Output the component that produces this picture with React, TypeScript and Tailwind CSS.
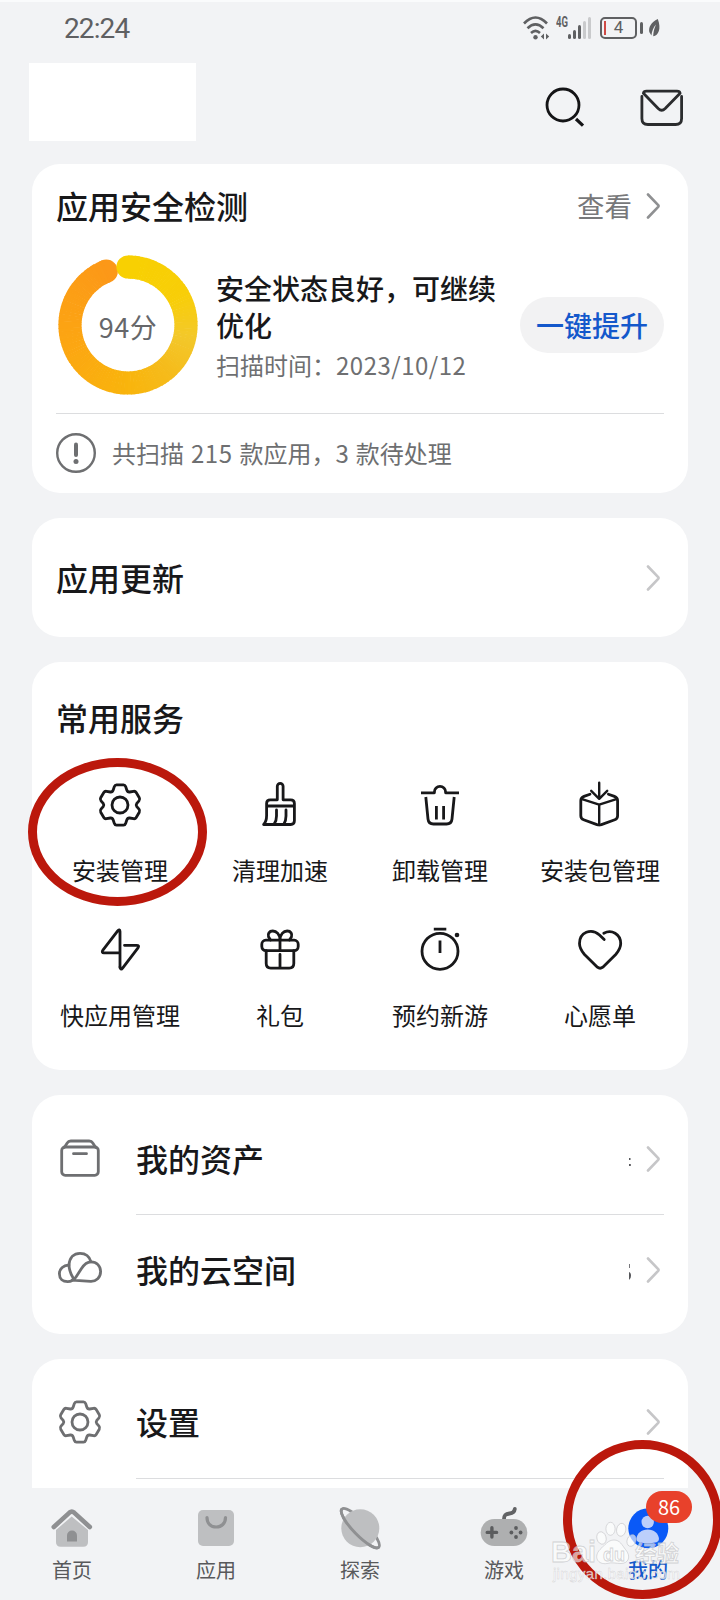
import type { ReactNode } from "react"

const GEAR =
  "M20.5 3.800H27.500Q29 3.800 29.600 5.400L30.800 9Q31.500 11.200 33.600 11L37.500 10.300Q39.300 10 40.200 11.500L43.300 16.800Q44.200 18.400 43 19.800L40.800 22.400Q39.700 24 40.800 25.600L43 28.200Q44.200 29.600 43.300 31.200L40.200 36.500Q39.300 38 37.500 37.700L33.600 37Q31.500 36.800 30.800 39L29.600 42.600Q29 44.200 27.500 44.200H20.500Q19 44.200 18.400 42.600L17.200 39Q16.500 36.800 14.400 37L10.500 37.700Q8.700 38 7.800 36.500L4.700 31.200Q3.800 29.600 5 28.200L7.200 25.600Q8.300 24 7.200 22.400L5 19.800Q3.800 18.400 4.700 16.800L7.800 11.500Q8.700 10 10.500 10.300L14.400 11Q16.500 11.200 17.200 9L18.400 5.400Q19 3.800 20.500 3.800Z"

function LineIcon({ children }: { children: ReactNode }) {
  return (
    <svg
      viewBox="0 0 48 48"
      className="h-12 w-12 shrink-0"
      fill="none"
      stroke="currentColor"
      strokeWidth="2.8"
      strokeLinecap="round"
      strokeLinejoin="round"
    >
      {children}
    </svg>
  )
}

function Chevron({ className = "text-[#c6c6c8]" }: { className?: string }) {
  return (
    <svg viewBox="0 0 14 28" className={`h-7 w-3.5 shrink-0 ${className}`} fill="none" stroke="currentColor" strokeWidth="2.6" strokeLinecap="round" strokeLinejoin="round">
      <path d="M2 2.5L12.2 13.2Q12.9 14 12.2 14.8L2 25.5" />
    </svg>
  )
}

const services = [
  {
    label: "安装管理",
    icon: (
      <>
        <path d={GEAR} />
        <circle cx="24" cy="24" r="8" />
      </>
    ),
  },
  {
    label: "清理加速",
    icon: (
      <>
        <path d="M10.6 25v-2.5q0-3.7 3.7-3.7h7V5.2a2.9 2.9 0 0 1 5.8 0v13.6h7.6q3.7 0 3.7 3.7V39.8q0 3.7-3.7 3.7H7.6c2-2 3-5 3-9V25h27.8" />
        <path d="M20.5 29v6q0 5-2.4 8.2M30 29v6q0 5-2.2 8.2" />
      </>
    ),
  },
  {
    label: "卸载管理",
    icon: (
      <>
        <path d="M5 11.8h13.4v-.8a5.6 5.6 0 0 1 11.2 0v.8H43" strokeLinecap="butt" />
        <path d="M9.8 16l2.2 22q.5 5 5.5 5h13q5 0 5.5-5l2.2-22M20.4 25v13.5M27.6 25v13.5" strokeLinecap="butt" />
      </>
    ),
  },
  {
    label: "安装包管理",
    icon: (
      <>
        <path d="M14 13.2L8 15.4q-3.2 1.2-3.2 4.4v15q0 3 2.8 4l13.4 4.8q2.2.7 4.4 0l13.4-4.8q2.8-1 2.8-4v-15q0-3.2-3.2-4.4L32.4 13.2" />
        <path d="M6 18.2l17.2 5.5L40.4 18.2M23.2 23.7V44M23.2 1.8v15.7M15.2 9.8l8 8 8-8" strokeWidth="2.4" />
      </>
    ),
  },
  {
    label: "快应用管理",
    icon: (
      <>
        <path d="M24 41V5.6c0-2-1.2-2.3-2.3-.8L6.9 24.2c-1.2 1.6-.6 2.6 1 2.6H24" />
        <path d="M28.5 19.3H40.6c2 0 2.6 1 1.4 2.6L26.6 42.2C25.4 43.8 24 43.2 24 41.2" />
      </>
    ),
  },
  {
    label: "礼包",
    icon: (
      <>
        <rect x="5.8" y="14.2" width="36.4" height="10.4" rx="4" />
        <path d="M10.2 24.6v13q0 4.5 4.5 4.5h18.6q4.5 0 4.5-4.5v-13M24 14v10M24 28.5V42" />
        <path d="M24 14C24 8.5 20.5 5 16.8 5C13.2 5 11.5 8 12.5 10.8L14.5 14M24 14C24 8.5 27.5 5 31.2 5C34.8 5 36.5 8 35.5 10.8L33.5 14" />
      </>
    ),
  },
  {
    label: "预约新游",
    icon: (
      <>
        <circle cx="24" cy="25.3" r="18" />
        <path d="M17.8 3.2h12.5M24 14.5v12.5" strokeLinecap="butt" />
        <circle cx="41" cy="9" r="2.3" fill="currentColor" stroke="none" />
      </>
    ),
  },
  {
    label: "心愿单",
    icon: (
      <path d="M28.2 13.6L23.5 9C15 1.5 3.5 6.5 3.5 17.5C3.5 22 5.5 25 8.5 28.5L21.4 41.2q2.7 2.2 5.4 0L39.7 28.5C42.7 25 44.7 22 44.7 17.5C44.7 8 35.5 3 27.8 7.3" />
    ),
  },
]

const navItems = [
  {
    label: "首页",
    icon: (
      <>
        <path d="M23.7 12.5L40 26V38q0 4.7-4.7 4.7H12.7Q8 42.7 8 38V26Z" fill="#bebfc1" />
        <path d="M5.8 23L21.5 8.6q2.3-2 4.6 0L41.8 23" fill="none" stroke="#8f9092" strokeWidth="4.6" strokeLinecap="round" />
        <path d="M19 37.5V31.5a5 5 0 0 1 10 0V37.5Z" fill="#8f9092" />
      </>
    ),
  },
  {
    label: "应用",
    icon: (
      <>
        <rect x="6" y="6" width="36" height="36" rx="5" fill="#bebfc1" />
        <path d="M15 13.5C15 19.5 19 23 24.2 23S33.5 19.5 33.5 13.5" fill="none" stroke="#8f9092" strokeWidth="3.2" strokeLinecap="round" />
      </>
    ),
  },
  {
    label: "探索",
    icon: (
      <g transform="translate(24.3 24.2)">
        <ellipse rx="26.5" ry="7" transform="rotate(46)" fill="none" stroke="#8f9092" strokeWidth="2.8" />
        <circle r="19" fill="#bebfc1" />
        <path d="M-26.5 0A26.5 7 0 0 0 26.5 0" transform="rotate(46)" fill="none" stroke="#8f9092" strokeWidth="3" />
      </g>
    ),
  },
  {
    label: "游戏",
    icon: (
      <>
        <path d="M24 15c0-4 2-5 5.5-5.5S34.5 7.5 34.8 5" fill="none" stroke="#626365" strokeWidth="3.8" strokeLinecap="round" />
        <rect x=".7" y="15" width="46.6" height="27" rx="13.5" fill="#aeafb0" />
        <path d="M7.2 28.4h9.4M11.9 23.7v9.4" stroke="#5b5c5e" strokeWidth="3.4" strokeLinecap="round" />
        <g fill="#5b5c5e">
          <circle cx="36" cy="24" r="1.9" />
          <circle cx="36" cy="33" r="1.9" />
          <circle cx="31.4" cy="28.5" r="1.9" />
          <circle cx="40.6" cy="28.5" r="1.9" />
        </g>
      </>
    ),
  },
  {
    label: "我的",
    active: true,
    icon: (
      <>
        <circle cx="24.3" cy="24.3" r="20" fill="#0a59f7" />
        <circle cx="23.7" cy="18" r="6.2" fill="#bccffb" />
        <path d="M12.4 35c.4-5.8 5-9.6 11.3-9.6S34.6 29.2 35 35q0 2.5-2.5 3.2-8.8 2-17.6 0-2.5-.7-2.5-3.2Z" fill="#bccffb" />
      </>
    ),
  },
]

// colour stops of the score ring, clockwise from the top
const stops: [number, number[]][] = [
  [0, [248, 208, 2]],
  [60, [248, 206, 8]],
  [100, [243, 200, 42]],
  [135, [245, 188, 28]],
  [180, [249, 180, 12]],
  [250, [252, 166, 18]],
  [339, [252, 152, 24]],
]

function colorAt(deg: number) {
  let i = 0
  while (i < stops.length - 2 && stops[i + 1][0] < deg) i++
  const [a, from] = stops[i]
  const [b, to] = stops[i + 1]
  const t = (deg - a) / (b - a)
  return `rgb(${from.map((c, k) => Math.round(c + (to[k] - c) * t)).join(",")})`
}

function point(deg: number) {
  const rad = (deg * Math.PI) / 180
  return [70 + 58 * Math.sin(rad), 70 - 58 * Math.cos(rad)]
}

function ScoreRing() {
  const steps = Array.from({ length: 113 }, (_, i) => i * 3)
  const end = point(338)
  return (
    <div className="relative flex h-[140px] w-[140px] shrink-0 items-center justify-center">
      <svg viewBox="0 0 140 140" className="absolute inset-0" fill="none" strokeWidth="23.2">
        <circle cx={end[0]} cy={end[1]} r="11.6" fill={colorAt(338)} />
        {steps.map((d) => {
          const p = point(d)
          const q = point(Math.min(d + 3.6, 338))
          return <path key={d} d={`M${p[0]} ${p[1]}A58 58 0 0 1 ${q[0]} ${q[1]}`} stroke={colorAt(d)} />
        })}
        <circle cx="70" cy="12" r="11.6" fill={colorAt(0)} />
      </svg>
      <span className="relative pt-0.5 text-[27px] leading-none tracking-[0.5px] text-[#66676a]">94分</span>
    </div>
  )
}

function StatusBar() {
  return (
    <div className="flex h-[52px] shrink-0 items-center justify-between border-t-2 border-[#fafbfc] pt-px pr-[58px] pl-[64px] text-[#5f6062]">
      <span className="pt-0.5 font-[Roboto] text-[28px] leading-none tracking-[-0.9px]">22:24</span>
      <div className="flex items-center">
        <svg viewBox="0 0 30 26" className="h-[26px] w-[30px]" fill="none" stroke="currentColor" strokeWidth="2.6">
          <path d="M2 8.5Q13.5-3.5 25 8.5M5.5 13.3Q13.5 5.5 21.5 13.3M9 18Q13.5 13.8 18 18" />
          <circle cx="13.5" cy="22.2" r="2.2" fill="currentColor" stroke="none" />
          <path d="M22 18.5v6l-3.2-3ZM24 18.5v6l3.2-3Z" fill="currentColor" stroke="none" />
        </svg>
        <span className="mb-3 ml-1 inline-block w-3 origin-left scale-x-[0.68] font-[Roboto] text-sm leading-none font-bold">4G</span>
        <svg viewBox="0 0 24 24" className="h-6 w-6" fill="currentColor">
          <rect x="0" y="18" width="3" height="5" rx="1.5" />
          <rect x="5" y="14" width="3" height="9" rx="1.5" />
          <rect x="10" y="9" width="3" height="14" rx="1.5" />
          <rect x="15" y="5" width="3" height="18" rx="1.5" className="text-[#c9cacc]" />
          <rect x="20" y="1" width="3" height="22" rx="1.5" className="text-[#c9cacc]" />
        </svg>
        <div className="ml-2 flex h-[22px] w-[37px] items-center rounded-[5px] border-2 border-[#5f6062] pl-0.5">
          <span className="h-3.5 w-0.5 bg-[#cf4a45]" />
          <span className="flex-1 pr-1 text-center font-[Roboto] text-[17px] leading-none">4</span>
        </div>
        <span className="ml-[3px] h-3 w-[3px] rounded-full bg-[#5f6062]" />
        <svg viewBox="0 0 14 20" className="ml-[5px] h-5 w-3.5" fill="currentColor">
          <path d="M9.8 1C3 4.5.5 9 1.3 14L3.4 17.5C4 13 5.3 9.5 8 6.5C6.2 10.5 5.3 14 5.2 18.3C10.5 17.5 13.5 11 9.8 1Z" />
        </svg>
      </div>
    </div>
  )
}

function Header() {
  return (
    <header className="flex h-[112px] shrink-0 items-start justify-between pt-[11px] pr-[34px] pl-[29px]">
      <div className="h-[78px] w-[167px] bg-white" />
      <div className="flex gap-[50px] pt-5 text-[#141416]">
        <LineIcon>
          <circle cx="23" cy="22" r="16" />
          <path d="M36 36L43 42.6" strokeWidth="3.2" strokeLinecap="butt" />
        </LineIcon>
        <LineIcon>
          <g className="text-[#2b2c2e]" stroke="currentColor">
            <path d="M3.900 13.500V35.500q0 6 6 6h27.700q6 0 6-6V13.500" />
            <path d="M5.400 10.200Q5.800 8.200 8.500 8.200H39Q41.700 8.200 42.100 10.200L27.200 25.500q-3.500 3.400-7 0Z" />
          </g>
        </LineIcon>
      </div>
    </header>
  )
}

function SafetyCard() {
  return (
    <section className="h-[329px] shrink-0 rounded-[28px] bg-white px-6">
      <div className="flex h-[83px] items-center justify-between pr-1">
        <h2 className="pb-0.5 text-[32px] leading-none font-medium text-[#18181a]">应用安全检测</h2>
        <div className="flex items-center gap-3.5 text-[27.5px] leading-none text-[#77787a]">
          查看
          <Chevron className="text-[#8f9092]" />
        </div>
      </div>
      <div className="flex h-[167px] items-start border-b border-[#dcdddf] pl-[2px]">
        <div className="mt-2">
          <ScoreRing />
        </div>
        <div className="mt-[23px] ml-[18px] w-[290px] shrink-0">
          <p className="text-[28px] leading-[37px] font-medium text-[#18181a]">安全状态良好，可继续优化</p>
          <p className="text-2xl leading-[42px] whitespace-nowrap text-[#6e6f71]">
            扫描时间：<span className="tracking-[0.5px]">2023/10/12</span>
          </p>
        </div>
        <button className="mt-[50px] ml-3.5 h-14 w-36 shrink-0 rounded-full bg-[#f2f2f3] text-[28px] leading-none font-medium whitespace-nowrap text-[#1458cb]">
          一键提升
        </button>
      </div>
      <div className="flex h-[78px] items-center gap-4 text-2xl text-[#6e6f71]">
        <svg viewBox="0 0 40 40" className="h-10 w-10" fill="none" stroke="currentColor">
          <circle cx="20" cy="20" r="18.8" strokeWidth="2.4" />
          <path d="M20 11.5V22" strokeWidth="4" strokeLinecap="round" />
          <circle cx="20" cy="28.5" r="2.5" fill="currentColor" stroke="none" />
        </svg>
        <span className="[word-spacing:1.5px]">
          共扫描 <span className="tracking-[0.6px]">215</span> 款应用，3 款待处理
        </span>
      </div>
    </section>
  )
}

function Row({ label, icon, hint, className = "" }: { label: string; icon: ReactNode; hint?: ReactNode; className?: string }) {
  return (
    <div className={`flex items-center gap-8 pl-6 text-[#6e6f71] ${className}`}>
      <LineIcon>{icon}</LineIcon>
      <div className="mr-6 flex flex-1 items-center pr-1">
        <span className="flex-1 pb-0.5 text-[32px] leading-none font-medium text-[#18181a]">{label}</span>
        <svg viewBox="0 0 4 24" className="mr-3.5 h-6 w-1" fill="#55565a">
          {hint}
        </svg>
        <Chevron />
      </div>
    </div>
  )
}

function Divider() {
  return <div className="mr-6 ml-[104px] h-px bg-[#dcdddf]" />
}

function Watermark() {
  return (
    <svg viewBox="0 0 150 80" className="absolute top-[1510px] left-[545px] h-20 w-[150px]" fill="#fff" fillOpacity=".62" stroke="#bfc0c3" strokeOpacity=".7" strokeWidth=".8">
      <text x="6" y="52" className="font-['Liberation_Sans'] text-[29px] font-bold">Bai</text>
      <ellipse cx="56.5" cy="28" rx="4.6" ry="6.3" transform="rotate(-15 56.5 28)" />
      <ellipse cx="65.5" cy="18.8" rx="4.6" ry="6.5" />
      <ellipse cx="76.2" cy="19.8" rx="4.6" ry="6.5" transform="rotate(10 76.2 19.8)" />
      <ellipse cx="86.5" cy="30.5" rx="4.4" ry="6" transform="rotate(20 86.5 30.5)" />
      <path d="M69 30c6 0 8 5 11.5 9.5 6 7 3 14-4.5 14-5 0-9-1.5-14 0-9 1.5-14-6.5-7-14C60 35 63 30 69 30Z" />
      <text x="58" y="51" className="font-['Liberation_Sans'] text-[18px] font-bold">du</text>
      <text x="90" y="51" className="font-['Noto_Sans_CJK_SC'] text-[22px] font-bold">经验</text>
      <text x="8" y="69" textLength="127" strokeWidth=".4" fillOpacity=".75" className="font-['Liberation_Sans'] text-[15.5px]">
        jingyan.baidu.com
      </text>
    </svg>
  )
}

function App() {
  return (
    <div className="relative flex h-[1600px] w-[720px] flex-col overflow-hidden bg-[#f2f3f5] font-['Noto_Sans_CJK_SC',sans-serif]">
      <StatusBar />
      <Header />

      <main className="flex h-[1324px] shrink-0 flex-col gap-[25px] overflow-hidden px-8">
        <SafetyCard />

        <section className="flex h-[119px] shrink-0 items-center justify-between rounded-[28px] bg-white pr-7 pl-6">
          <h2 className="pb-0.5 text-[32px] leading-none font-medium text-[#18181a]">应用更新</h2>
          <Chevron />
        </section>

        <section className="h-[408px] shrink-0 rounded-[28px] bg-white px-2 pt-[38px]">
          <h2 className="pl-4 text-[32px] leading-[34px] font-medium text-[#18181a]">常用服务</h2>
          <div className="grid grid-cols-4 pt-[47px] text-[#18181a]">
            {services.map((s) => (
              <div key={s.label} className="flex h-[145px] flex-col items-center gap-[23px]">
                <LineIcon>{s.icon}</LineIcon>
                <span className="text-2xl leading-9 whitespace-nowrap">{s.label}</span>
              </div>
            ))}
          </div>
        </section>

        <section className="flex h-[239px] shrink-0 flex-col rounded-[28px] bg-white">
          <Row
            label="我的资产"
            className="h-[119px] pt-2"
            icon={
              <g transform="translate(0 4)">
                <rect x="5.7" y="8" width="36.6" height="28.3" rx="3.5" />
                <path d="M8.5 8.2l2.7-4.2q1.2-2 3.6-2h18.4q2.4 0 3.6 2l2.7 4.2M17.5 14.7h13" />
              </g>
            }
            hint={<path d="M1 11h1.500v2H1ZM1 17h1.800v2H1Z" />}
          />
          <Divider />
          <Row
            label="我的云空间"
            className="flex-1 pb-[9px]"
            icon={
              <g transform="translate(0 .5)">
                <path d="M13 18.5C13.5 11 18 6.800 24 6.800c5.500 0 9.500 3.200 11 8.500M13 18.500c0 5 1.500 9 5 14.500" />
                <path d="M13 18.500C7 19 3.400 22.500 3.400 27.300c0 5 3.600 7.900 8.200 7.900C16 35.200 18 33.500 20 30.500l5.500-8.500C28 18 31 15.300 35 15.300c5.700 0 9.600 4.300 9.600 9.800 0 6-4.300 10-10 9.800L16 33.600" />
              </g>
            }
            hint={<path d="M1 6h.8v4H1ZM1 14q2 .5 2 3.800T1 22Z" />}
          />
        </section>

        <section className="h-[200px] shrink-0 rounded-t-[28px] bg-white">
          <Row
            label="设置"
            className="h-[119px] pt-[7px]"
            icon={
              <>
                <path d={GEAR} />
                <circle cx="24" cy="24" r="8" />
              </>
            }
          />
          <Divider />
        </section>
      </main>

      <nav className="grid h-28 shrink-0 grid-cols-5 pt-4">
        {navItems.map((n) => (
          <div key={n.label} className="relative flex flex-col items-center gap-[3px]">
            <svg viewBox="0 0 48 48" className="h-12 w-12 overflow-visible">
              {n.icon}
            </svg>
            <span className={`text-xl leading-[30px] ${n.active ? "font-medium text-[#1458cb]" : "text-[#58595b]"}`}>{n.label}</span>
            {n.active && (
              <span className="absolute -top-[13px] left-[70px] flex h-8 w-[46px] items-center justify-center rounded-full bg-[#e8412b] text-xl text-white">
                86
              </span>
            )}
          </div>
        ))}
      </nav>

      {/* Hand-drawn highlights */}
      <div className="absolute top-[758px] left-[28px] h-[148px] w-[179px] rounded-[50%] border-[9px] border-[#bb180c]" />
      <div className="absolute top-[1440px] left-[563px] h-[159px] w-[159px] rounded-full border-[9px] border-[#bb180c]" />
      <Watermark />
    </div>
  )
}

export default App
